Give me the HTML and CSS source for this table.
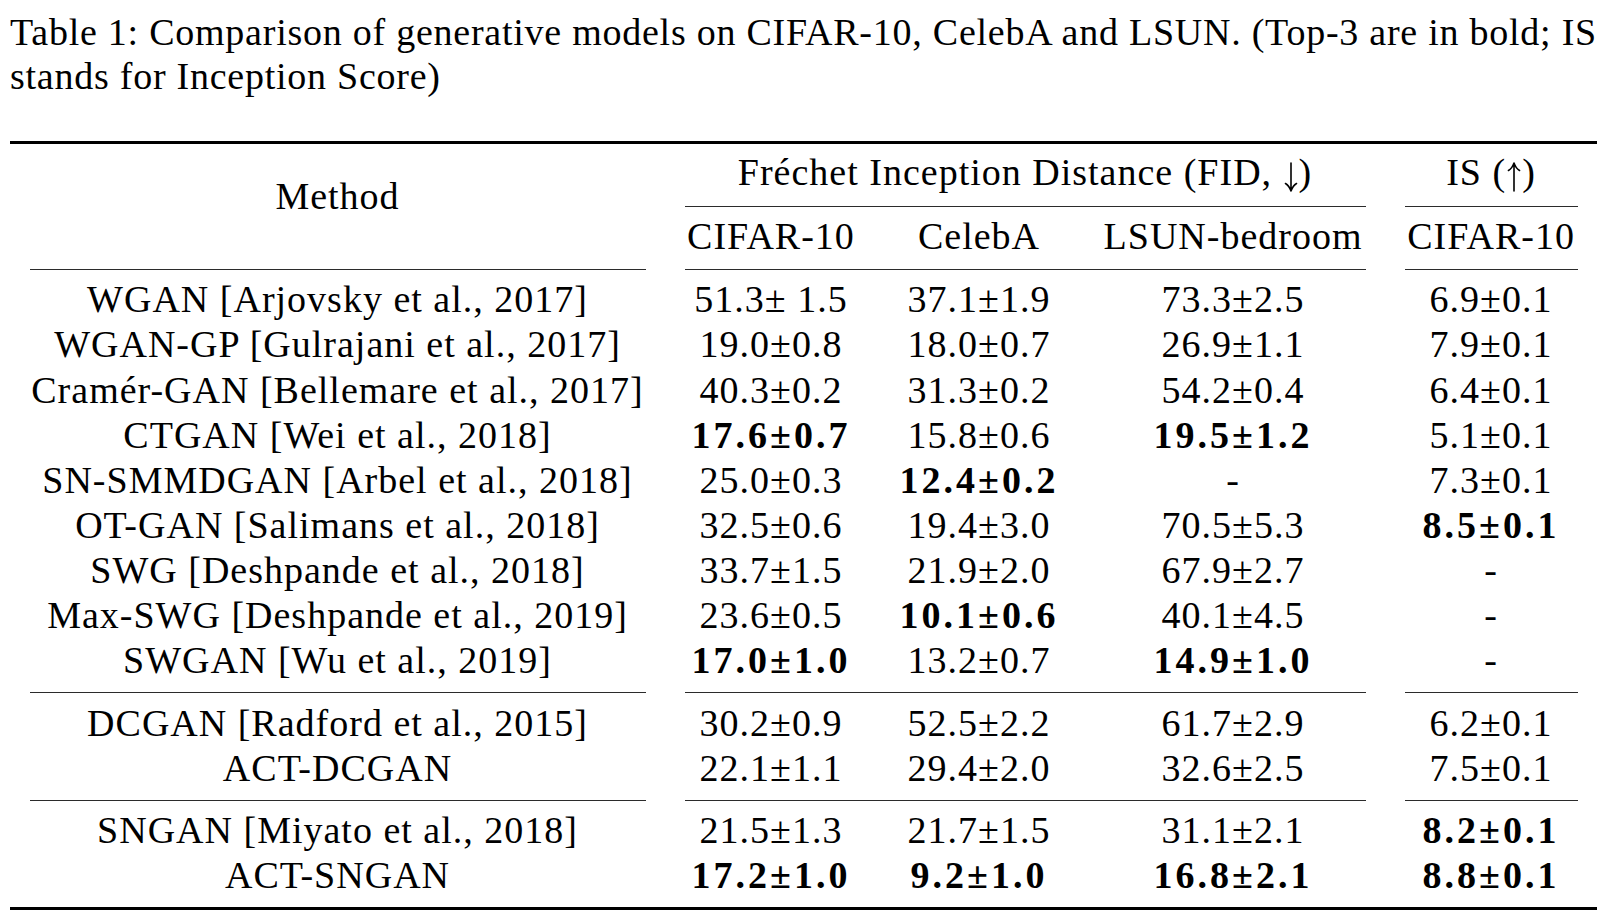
FILE: index.html
```html
<!DOCTYPE html>
<html lang="en">
<head>
<meta charset="utf-8">
<title>Table 1</title>
<link rel="stylesheet" href="styles.css">
</head>
<body>
<div class="page">
  <p class="caption">
    <span class="cap-line cap-first">Table 1: Comparison of generative models on CIFAR-10, CelebA and LSUN. (Top-3 are in bold; IS</span>
    <span class="cap-line">stands for Inception Score)</span>
  </p>
  <table class="results">
    <colgroup>
      <col class="c-method">
      <col class="c-cifar">
      <col class="c-celeba">
      <col class="c-lsun">
      <col class="c-is">
    </colgroup>
    <thead>
      <tr>
        <th rowspan="2" class="th-method">Method</th>
        <th colspan="3" class="th-group"><div class="group-head">Fréchet Inception Distance (FID, <svg class="arrow" viewBox="0 0 14 30" width="14" height="30" aria-label="↓"><path d="M7 1V29M1.5 21.5Q5 23.5 7 29Q9 23.5 12.5 21.5"/></svg>)</div></th>
        <th class="th-group"><div class="group-head">IS (<svg class="arrow" viewBox="0 0 14 30" width="14" height="30" aria-label="↑"><path d="M7 29V1M1.5 8.5Q5 6.5 7 1Q9 6.5 12.5 8.5"/></svg>)</div></th>
      </tr>
      <tr class="sub">
        <th>CIFAR-10</th>
        <th>CelebA</th>
        <th>LSUN-bedroom</th>
        <th>CIFAR-10</th>
      </tr>
    </thead>
    <tbody>
      <tr class="rule"><td><div class="cmid"></div></td><td colspan="3"><div class="cmid"></div></td><td><div class="cmid"></div></td></tr>
      <tr class="first"><td>WGAN [Arjovsky et al., 2017]</td><td>51.3± 1.5</td><td>37.1±1.9</td><td>73.3±2.5</td><td>6.9±0.1</td></tr>
      <tr><td>WGAN-GP [Gulrajani et al., 2017]</td><td>19.0±0.8</td><td>18.0±0.7</td><td>26.9±1.1</td><td>7.9±0.1</td></tr>
      <tr><td>Cramér-GAN [Bellemare et al., 2017]</td><td>40.3±0.2</td><td>31.3±0.2</td><td>54.2±0.4</td><td>6.4±0.1</td></tr>
      <tr><td>CTGAN [Wei et al., 2018]</td><td><b>17.6±0.7</b></td><td>15.8±0.6</td><td><b>19.5±1.2</b></td><td>5.1±0.1</td></tr>
      <tr><td>SN-SMMDGAN [Arbel et al., 2018]</td><td>25.0±0.3</td><td><b>12.4±0.2</b></td><td>-</td><td>7.3±0.1</td></tr>
      <tr><td>OT-GAN [Salimans et al., 2018]</td><td>32.5±0.6</td><td>19.4±3.0</td><td>70.5±5.3</td><td><b>8.5±0.1</b></td></tr>
      <tr><td>SWG [Deshpande et al., 2018]</td><td>33.7±1.5</td><td>21.9±2.0</td><td>67.9±2.7</td><td>-</td></tr>
      <tr><td>Max-SWG [Deshpande et al., 2019]</td><td>23.6±0.5</td><td><b>10.1±0.6</b></td><td>40.1±4.5</td><td>-</td></tr>
      <tr class="last"><td>SWGAN [Wu et al., 2019]</td><td><b>17.0±1.0</b></td><td>13.2±0.7</td><td><b>14.9±1.0</b></td><td>-</td></tr>
      <tr class="rule"><td><div class="cmid"></div></td><td colspan="3"><div class="cmid"></div></td><td><div class="cmid"></div></td></tr>
      <tr class="first"><td>DCGAN [Radford et al., 2015]</td><td>30.2±0.9</td><td>52.5±2.2</td><td>61.7±2.9</td><td>6.2±0.1</td></tr>
      <tr class="last"><td>ACT-DCGAN</td><td>22.1±1.1</td><td>29.4±2.0</td><td>32.6±2.5</td><td>7.5±0.1</td></tr>
      <tr class="rule"><td><div class="cmid"></div></td><td colspan="3"><div class="cmid"></div></td><td><div class="cmid"></div></td></tr>
      <tr class="first"><td>SNGAN [Miyato et al., 2018]</td><td>21.5±1.3</td><td>21.7±1.5</td><td>31.1±2.1</td><td><b>8.2±0.1</b></td></tr>
      <tr class="last"><td>ACT-SNGAN</td><td><b>17.2±1.0</b></td><td><b>9.2±1.0</b></td><td><b>16.8±2.1</b></td><td><b>8.8±0.1</b></td></tr>
    </tbody>
  </table>
</div>
</body>
</html>
```

FILE: styles.css
```css
html, body {
  margin: 0;
  padding: 0;
  background: #ffffff;
}

body {
  color: #000000;
  font-family: "Liberation Serif", "Times New Roman", serif;
}

.page {
  width: 1587px;
  margin-left: 10px;
}

.caption {
  margin: 9.5px 0 0 0;
  font-size: 38px;
  line-height: 44.3px;
  letter-spacing: 0.75px;
}

.cap-line {
  display: block;
}

.cap-first {
  white-space: nowrap;
  text-align: justify;
  text-align-last: justify;
}

.results {
  margin-top: 43.2px;
  width: 1587px;
  table-layout: fixed;
  border-collapse: separate;
  border-spacing: 0;
  border-top: 3px solid #000;
  border-bottom: 3px solid #000;
  font-size: 38px;
  line-height: 45.1px;
  letter-spacing: 1px;
}

.c-method { width: 655px; }
.c-cifar { width: 212px; }
.c-celeba { width: 204px; }
.c-lsun { width: 304px; }
.c-is { width: 212px; }

.results th,
.results td {
  padding: 0;
  text-align: center;
  font-weight: normal;
  white-space: nowrap;
}

.results .th-method {
  vertical-align: top;
  padding-top: 29.4px;
}

.results .th-group {
  vertical-align: top;
}

.group-head {
  margin: 0 19.5px;
  padding: 6px 0 10.8px;
  border-bottom: 1px solid #2b2b2b;
}

.arrow {
  vertical-align: -7px;
  margin: 0 1px;
  fill: none;
  stroke: #000;
  stroke-width: 1.6;
  stroke-linecap: round;
  stroke-linejoin: round;
}

.results .sub th {
  padding: 6.6px 0 9.9px;
}

.results .rule td {
  line-height: 0;
}

.cmid {
  height: 1px;
  margin: 0 19.5px;
  background: #2b2b2b;
}

.results tr.first td {
  padding-top: 7.6px;
}

.results tr.last td {
  padding-bottom: 8.9px;
}

.results b {
  font-weight: bold;
  letter-spacing: 3px;
}
```
